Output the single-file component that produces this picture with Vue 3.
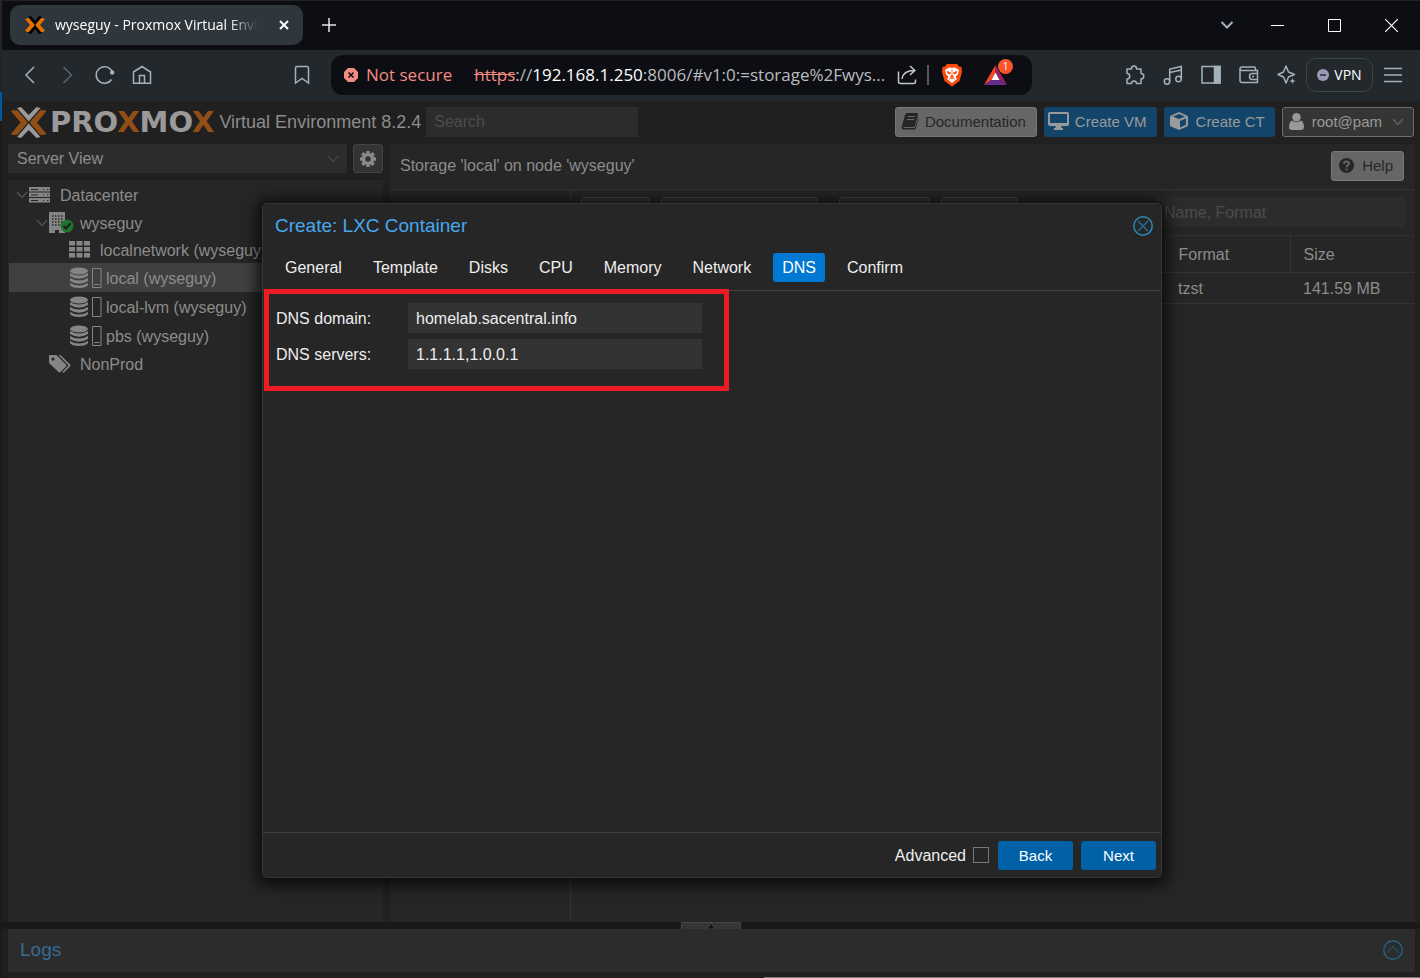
<script setup>
import { ref } from 'vue'

const search = ref('')
const filter = ref('')
const view = ref('Server View')
const domain = ref('homelab.sacentral.info')
const servers = ref('1.1.1.1,1.0.0.1')
const advanced = ref(false)
const tabs = ['General', 'Template', 'Disks', 'CPU', 'Memory', 'Network', 'DNS', 'Confirm']
const active = ref('DNS')
const nodes = [
  { label: 'Datacenter', icon: 'server', level: 0, open: true },
  { label: 'wyseguy', icon: 'node', level: 1, open: true },
  { label: 'localnetwork (wyseguy)', icon: 'grid', level: 2 },
  { label: 'local (wyseguy)', icon: 'storage', level: 2, used: true, selected: true },
  { label: 'local-lvm (wyseguy)', icon: 'storage', level: 2 },
  { label: 'pbs (wyseguy)', icon: 'storage', level: 2, used: true },
  { label: 'NonProd', icon: 'tags', level: 1 }
]
const rowsOfThree = [0, 1, 2]
</script>

<template>
  <div class="screen">
    <div class="edge" aria-hidden="true"></div>
    <div class="window">
      <header class="titlebar">
        <div class="tab">
          <svg width="20" height="18" viewBox="0 0 20 18">
            <path d="M0 3L3 2H5L11 9L5 16H2L0 14.500L5 9Z M20 3L17 2H15L9 9L15 16H18L20 14.500L15 9Z" fill="#e57000" />
            <path d="M3 1L6 0L10 5L14 0L17 1L10 9Z M3 17L6 18L10 13L14 18L17 17L10 9Z" fill="#000" />
          </svg>
          <span class="tab-title">wyseguy - Proxmox Virtual Envi</span>
          <button class="plain tab-close" aria-label="Close tab">
            <svg width="10" height="10" viewBox="0 0 10 10" stroke="#fff" stroke-width="2"><path d="M1 1L9 9M9 1L1 9" /></svg>
          </button>
        </div>
        <button class="plain newtab" aria-label="New tab">
          <svg width="14" height="14" viewBox="0 0 14 14" stroke="#e6e6e8" stroke-width="1.500"><path d="M7 0V14M0 7H14" /></svg>
        </button>
        <div class="controls">
          <button class="plain chevron" aria-label="Search tabs">
            <svg width="14" height="10" viewBox="0 0 14 10" fill="none" stroke="#a6b2b9" stroke-width="2"><path d="M1.500 2L7 7.500L12.500 2" /></svg>
          </button>
          <button class="plain" aria-label="Minimize">
            <svg width="13" height="13" viewBox="0 0 13 13" stroke="#fff"><path d="M0 6.500H13" /></svg>
          </button>
          <button class="plain" aria-label="Maximize">
            <svg width="13" height="13" viewBox="0 0 13 13" stroke="#fff" fill="none"><path d="M.5 .5H12.500V12.500H.5Z" /></svg>
          </button>
          <button class="plain" aria-label="Close">
            <svg width="13" height="13" viewBox="0 0 13 13" stroke="#fff" stroke-width="1.200"><path d="M0 0L13 13M13 0L0 13" /></svg>
          </button>
        </div>
      </header>

      <nav class="toolbar">
        <button class="plain nav" aria-label="Back">
          <svg width="20" height="20" viewBox="0 0 20 20"><path d="M13 2L5 10L13 18" /></svg>
        </button>
        <button class="plain nav off" aria-label="Forward">
          <svg width="20" height="20" viewBox="0 0 20 20"><path d="M5.500 2L13.500 10L5.500 18" /></svg>
        </button>
        <button class="plain nav" aria-label="Reload">
          <svg width="20" height="20" viewBox="0 0 20 20"><path d="M16.500 14.500A8.300 8.300 0 1 1 16.800 6" /><circle cx="17.200" cy="7.500" r="2.200" fill="#a3b2ba" stroke="none" /></svg>
        </button>
        <button class="plain nav" aria-label="Home">
          <svg width="20" height="20" viewBox="0 0 20 20"><path d="M1.500 7L10 1.500L18.500 7V18.300H1.500ZM7.500 18V10.500H12.500V18" /></svg>
        </button>
        <button class="plain nav bookmark" aria-label="Bookmark">
          <svg width="20" height="20" viewBox="0 0 20 20"><path d="M3.500 18V3Q3.500 1.500 5 1.500H15Q16.500 1.500 16.500 3V18L10 13.500Z" /></svg>
        </button>
        <div class="address">
          <svg width="14" height="14" viewBox="0 0 14 14"><path d="M4 0H10L14 4V10L10 14H4L0 10V4Z" fill="#f28b82" /><path d="M4.500 4.500L9.500 9.500M9.500 4.500L4.500 9.500" stroke="#0d0e13" stroke-width="1.500" /></svg>
          <span class="insecure">Not secure</span>
          <span class="url"><s>https</s>://<b>192.168.1.250</b>:8006/#v1:0:=storage%2Fwys...</span>
          <button class="plain share" aria-label="Share">
            <svg width="20" height="20" viewBox="0 0 20 20" fill="none" stroke="#c3c6ca" stroke-width="1.500"><path d="M1.500 6.500V16.500Q1.500 18.500 3.500 18.500H16.500Q18.500 18.500 18.500 16.500V14.500M5 14Q6 5.500 17.500 5.500M13 1L17.800 5.500L13 10" /></svg>
          </button>
          <i class="divider"></i>
          <button class="plain brave" aria-label="Shields">
            <svg width="20" height="23" viewBox="0 0 20 23">
              <path d="M5 0H15L17 2.500L19.500 3L20 8L17.500 17L10 22.500L2.500 17L0 8L.5 3L3 2.500Z" fill="#fb4b0c" />
              <path d="M7 3.500L10 4L13 3.500L17 6L16 10L13.500 13L15 15L10 19L5 15L6.500 13L4 10L3 6Z" fill="#fff" />
              <path d="M5 7.500L8.500 8.500L8 10L6 9.500ZM15 7.500L11.500 8.500L12 10L14 9.500ZM8 12.500L10 11.500L12 12.500L10 14ZM10 5V11.500M7 15L10 14.500L13 15" fill="#fb4b0c" stroke="#fb4b0c" stroke-width=".7" />
            </svg>
          </button>
          <button class="plain rewards" aria-label="Rewards">
            <svg width="23" height="20" viewBox="0 0 23 20"><path d="M11.500 0L0 20L7.500 15L11.500 7.500Z" fill="#ff4724" /><path d="M11.500 0L23 20L15.500 15L11.500 7.500Z" fill="#9e1f63" /><path d="M0 20H23L15.500 15H7.500Z" fill="#662d91" /><path d="M11.500 7.500L15.500 15H7.500Z" fill="#fff" /></svg>
            <span class="badge">1</span>
          </button>
        </div>
        <button class="plain ext" aria-label="Extensions">
          <svg width="20" height="20" viewBox="0 0 20 20"><path d="M2 4H6.500V3.500A2.500 2.500 0 0 1 11.500 3.500V4H16V8.500A2.300 2.300 0 0 1 16 14V18.500H11.500A2.500 2.500 0 0 0 6.500 18.500H2V14A2.700 2.700 0 0 0 2 8.500Z" stroke-linejoin="round" /></svg>
        </button>
        <button class="plain ext" aria-label="Media">
          <svg width="20" height="20" viewBox="0 0 20 20"><circle cx="4" cy="16.500" r="2.700" /><circle cx="15.500" cy="14" r="2.700" /><path d="M6.700 16.500V4L18.300 1.500V14M6.700 7.500L18.300 5" /></svg>
        </button>
        <button class="plain ext" aria-label="Sidebar">
          <svg width="20" height="20" viewBox="0 0 20 20"><path d="M1 1.500H19V18H1Z" /><path d="M13.500 1.500H19V18H13.500Z" fill="#a3b2ba" /></svg>
        </button>
        <button class="plain ext" aria-label="Wallet">
          <svg width="20" height="20" viewBox="0 0 20 20"><path d="M16.500 5V3.500Q16.500 2 15 2H3Q1 2 1 4Q1 5.500 3 5.500H18.500V17.500H3Q1 17.500 1 15.500V4M18.500 8.500H13Q10.500 8.500 10.500 11.500Q10.500 14.500 13 14.500H18.500M13 11.500H15" /></svg>
        </button>
        <button class="plain ext" aria-label="Assistant">
          <svg width="20" height="20" viewBox="0 0 20 20"><path d="M9 1L11.500 7L17.500 9.500L11.500 12L9 18L6.500 12L1 9.500L6.500 7Z" stroke-linejoin="round" /><path d="M15.500 12.500L16.500 15L19 16L16.500 17L15.500 19.500L14.500 17L12 16L14.500 15Z" fill="#a3b2ba" stroke="#23282d" stroke-width=".5" /></svg>
        </button>
        <button class="vpn">
          <svg width="12" height="12" viewBox="0 0 12 12"><circle cx="6" cy="6" r="6" fill="#9a98b5" /><path d="M3 6H9" stroke="#23282d" stroke-width="1.500" /></svg>
          VPN
        </button>
        <button class="plain menu" aria-label="Menu">
          <svg width="20" height="16" viewBox="0 0 20 16"><path d="M1 1.500H19M1 8H19M1 14.500H19" /></svg>
        </button>
      </nav>

      <div class="page">
        <div class="header">
          <svg class="mark" width="36" height="31" viewBox="0 0 36 31">
            <path d="M.5 4L6 3.500L16.500 15.500L6 27.500L.5 27L10 15.500ZM35 4L29.500 3.500L19 15.500L29.500 27.500L35 27L25.500 15.500Z" fill="#914f16" stroke="#914f16" stroke-width="1" />
            <path d="M6 1L10 0L17.700 8L25.500 0L29.500 1L17.700 14.500ZM6 30L10 31L17.700 23L25.500 31L29.500 30L17.700 16.500Z" fill="#9a9a9a" />
          </svg>
          <span class="wordmark">PRO<em>X</em>MO<em>X</em></span>
          <span class="version">Virtual Environment 8.2.4</span>
          <input v-model="search" class="search" placeholder="Search" aria-label="Search" />
          <div class="actions">
            <button class="btn grey">
              <svg width="18" height="18" viewBox="0 0 18 18"><path d="M6 1H16Q17.500 1.500 17 3L14 13.500Q13.500 15 12 15H3Q2 15.500 3 16H12.500Q14 16 14.500 14.500L17.500 5Q18 6 17.500 7L15 16Q14.500 17.500 13 17.500H3Q0 17 .8 14.500L4 3Q4.500 1.500 6 1Z" /><path d="M7 4.500H14M6 7.500H13" stroke="#666" stroke-width="1.200" /></svg>
              Documentation
            </button>
            <button class="btn blue">
              <svg width="22" height="18" viewBox="0 0 22 18"><path fill-rule="evenodd" d="M2 0H19Q21 0 21 2V12Q21 14 19 14H13.500V16H15V18H6V16H7.500V14H2Q0 14 0 12V2Q0 0 2 0ZM2 2V11H19V2Z" /></svg>
              Create VM
            </button>
            <button class="btn blue ct">
              <svg width="18" height="18" viewBox="0 0 18 18"><path fill-rule="evenodd" d="M9 0L17 3.500Q18 4 18 5V13Q18 14 17 14.500L9 18L1 14.500Q0 14 0 13V5Q0 4 1 3.500ZM9 2L3 4.500L9 7L15 4.500ZM10 9V15.500L16 12.800V6.300Z" /></svg>
              Create CT
            </button>
            <button class="btn user">
              <svg width="15" height="17" viewBox="0 0 15 17"><circle cx="7.500" cy="4.200" r="4.200" /><path d="M3 7.500Q7.500 11 12 7.500Q15 9 15 14Q15 17 12 17H3Q0 17 0 14Q0 9 3 7.500Z" /></svg>
              root@pam
              <svg class="caret" width="12" height="8" viewBox="0 0 12 8"><path d="M1 1L6 6.500L11 1" /></svg>
            </button>
          </div>
        </div>

        <div class="body">
          <aside class="left">
            <div class="viewrow">
              <div class="selectwrap">
                <select v-model="view" aria-label="View"><option>Server View</option></select>
                <svg width="12" height="8" viewBox="0 0 12 8"><path d="M1 1L6 6.500L11 1" /></svg>
              </div>
              <button class="gear" aria-label="Settings">
                <svg width="16" height="16" viewBox="0 0 16 16"><circle cx="8" cy="8" r="4.500" fill="none" stroke="#898989" stroke-width="3.400" /><path d="M8 0V3M8 13V16M0 8H3M13 8H16M2.300 2.300L4.500 4.500M11.500 11.500L13.700 13.700M2.300 13.700L4.500 11.500M11.500 4.500L13.700 2.300" stroke="#898989" stroke-width="3.400" /></svg>
              </button>
            </div>
            <ul class="tree">
              <li v-for="n in nodes" :key="n.label" :class="[n.icon, 'level' + n.level, { selected: n.selected }]">
                <svg v-if="n.open" class="expand" width="12" height="8" viewBox="0 0 12 8"><path d="M1 1L6 6.500L11 1" /></svg>
                <svg v-if="n.icon === 'server'" width="21" height="16" viewBox="0 0 21 16">
                  <g v-for="r in rowsOfThree" :key="r" :transform="`translate(0 ${r * 5.5})`"><path d="M0 0H21V4.500H0Z" /><path d="M2 2.500H9M14 2.500H15M18 2.500H19.500" stroke="#262626" /></g>
                </svg>
                <svg v-else-if="n.icon === 'node'" class="building" width="25" height="22" viewBox="0 0 25 22">
                  <path d="M0 0H16V21H10V18H6V21H0Z" />
                  <path d="M3 4H14M3 7H14M3 10H14M3 13H14" stroke="#262626" stroke-width="1.500" stroke-dasharray="1.500 1.500" />
                  <circle cx="18" cy="14" r="6.500" fill="#20742f" /><path d="M14.500 14L17 16.500L21.500 11.500" fill="none" stroke="#1d1d1d" stroke-width="2" />
                </svg>
                <svg v-else-if="n.icon === 'grid'" width="21" height="17" viewBox="0 0 21 17">
                  <g v-for="r in rowsOfThree" :key="r" :transform="`translate(0 ${r * 6})`"><path d="M0 0H6V4.500H0ZM7.500 0H13.500V4.500H7.500ZM15 0H21V4.500H15Z" /></g>
                </svg>
                <svg v-else-if="n.icon === 'storage'" width="33" height="22" viewBox="0 0 33 22">
                  <ellipse cx="10" cy="4" rx="9" ry="3.500" />
                  <path d="M1 6Q10 11 19 6V9Q10 14.500 1 9ZM1 11Q10 16 19 11V14Q10 19.500 1 14ZM1 16Q10 21 19 16V18Q17 21 10 21Q3 21 1 18Z" />
                  <path d="M23.500 1.500H32V20.500H23.500Z" fill="none" stroke="#858585" /><path v-if="n.used" d="M25 17.500H30.500" stroke="#858585" />
                </svg>
                <svg v-else width="22" height="18" viewBox="0 0 22 18">
                  <path fill-rule="evenodd" d="M0 1Q0 0 1 0H7.500L17 9.500Q18 10.500 17 11.500L11.500 17Q10.500 18 9.500 17L0 8ZM4 2.500A1.600 1.600 0 1 0 4 5.700A1.600 1.600 0 1 0 4 2.500Z" /><path d="M9.500 0H11.500L21 9.500Q22 10.500 21 11.500L15 17.500Q14 18 13.300 17L19 11Q19.500 10.500 19 10Z" />
                </svg>
                <span>{{ n.label }}</span>
              </li>
            </ul>
          </aside>

          <section class="content">
            <div class="contenthead">
              <span>Storage 'local' on node 'wyseguy'</span>
              <button class="btn grey help">
                <svg width="15" height="15" viewBox="0 0 15 15"><circle cx="7.500" cy="7.500" r="7.500" /><path d="M5 5.800Q5 3.500 7.500 3.500Q10 3.500 10 5.500Q10 6.600 8.700 7.300Q7.600 8 7.600 9.200M7.600 10.500V12.500" fill="none" stroke="#666" stroke-width="2" /></svg>
                Help
              </button>
            </div>
            <div class="split">
              <div class="subnav"></div>
              <div class="storage">
                <div class="storagebar">
                  <button class="ghost upload" aria-label="Upload"></button>
                  <button class="ghost download" aria-label="Download from URL"></button>
                  <button class="ghost templates" aria-label="Templates"></button>
                  <button class="ghost remove" aria-label="Remove"></button>
                  <input v-model="filter" placeholder="Name, Format" aria-label="Name, Format" />
                </div>
                <table>
                  <thead><tr><th></th><th class="fmt">Format</th><th class="size">Size</th></tr></thead>
                  <tbody><tr><td></td><td>tzst</td><td>141.59 MB</td></tr></tbody>
                </table>
              </div>
            </div>
          </section>
        </div>

        <div class="splitter">
          <button aria-label="Expand logs"><svg width="10" height="6" viewBox="0 0 10 6"><path d="M5 0L9 6H1Z" fill="#151515" stroke="#555" stroke-width=".7" /></svg></button>
        </div>
        <footer class="logs">
          <span>Logs</span>
          <button class="plain" aria-label="Show logs">
            <svg width="20" height="20" viewBox="0 0 20 20" fill="none"><circle cx="10" cy="10" r="9.300" stroke="#23657f" stroke-width="1.400" /><path d="M4.500 12.500L10 6.500L15.500 12.500" stroke="#204c63" stroke-width="1.500" /></svg>
          </button>
        </footer>
        <div class="bottomline"></div>

        <div class="overlay">
          <form class="dialog" role="dialog" aria-labelledby="dialog-title" @submit.prevent>
            <div class="dialoghead">
              <h1 id="dialog-title">Create: LXC Container</h1>
              <button type="button" class="plain" aria-label="Close dialog">
                <svg width="20" height="20" viewBox="0 0 20 20" fill="none"><circle cx="10" cy="10" r="9.200" stroke="#2a8db5" stroke-width="1.500" /><path d="M5 5L15 15M15 5L5 15" stroke="#1d6d96" stroke-width="1.500" /></svg>
              </button>
            </div>
            <div class="tabs" role="tablist">
              <button v-for="t in tabs" :key="t" type="button" role="tab" :aria-selected="active === t" :class="{ active: active === t }" @click="active = t">{{ t }}</button>
            </div>
            <div class="fields">
              <label for="dns-domain">DNS domain:</label><input id="dns-domain" v-model="domain" />
              <label for="dns-servers">DNS servers:</label><input id="dns-servers" v-model="servers" />
              <div class="highlight"></div>
            </div>
            <div class="dialogfoot">
              <label for="advanced">Advanced</label>
              <input id="advanced" v-model="advanced" type="checkbox" />
              <button type="button">Back</button>
              <button type="submit">Next</button>
            </div>
          </form>
        </div>
      </div>
    </div>
  </div>
</template>

<style>
body {
  background: #212121;
}
</style>

<style scoped>
* {
  box-sizing: border-box;
}
.screen {
  display: flex;
  min-height: 100vh;
  font: 16px/20px "Liberation Sans", Arial, sans-serif;
  color: #8c8c8c;
  background: #202020;
}
.edge {
  width: 2px;
  background: linear-gradient(#242424 92px, #00589f 92px, #00589f 121px, #1b1b1b 121px);
}
.window {
  flex: 1;
  min-width: 0;
  display: flex;
  flex-direction: column;
}
button, input, select {
  font: inherit;
  color: inherit;
  margin: 0;
}
svg {
  display: block;
  flex: none;
}
.plain {
  display: flex;
  align-items: center;
  justify-content: center;
  padding: 0;
  border: 0;
  background: none;
}

/* browser frame */
.titlebar {
  display: flex;
  align-items: center;
  height: 50px;
  padding: 0 0 1px 8px;
  border-top: 1px solid #222;
  background: #0d0e13;
}
.tab {
  display: flex;
  align-items: center;
  width: 293px;
  height: 40px;
  padding: 0 14px 0 15px;
  border-radius: 10px;
  background: #30373c;
  color: #fff;
  font: 14px/20px "Open Sans", "Noto Sans", sans-serif;
}
.tab-title {
  margin-left: 10px;
  white-space: nowrap;
  mask-image: linear-gradient(90deg, #000 85%, transparent);
}
.tab-close {
  margin-left: auto;
}
.newtab {
  width: 52px;
  height: 40px;
}
.controls {
  display: flex;
  margin-left: auto;
}
.controls button {
  width: 57px;
  height: 48px;
}
.controls .chevron {
  width: 44px;
}
.toolbar {
  display: flex;
  align-items: center;
  height: 51px;
  padding: 0 7px 1px 10px;
  background: #23282d;
}
.toolbar svg {
  fill: none;
}
.nav, .ext, .menu {
  height: 36px;
  stroke: #a3b2ba;
  stroke-width: 1.5;
}
.nav {
  width: 37px;
}
.off {
  stroke: #59636a;
}
.bookmark {
  margin-left: 123px;
}
.ext {
  width: 38px;
}
.menu {
  width: 40px;
}
.address {
  display: flex;
  flex: 1;
  align-items: center;
  min-width: 0;
  height: 40px;
  margin: 0 84px 0 11px;
  padding: 0 25px 0 13px;
  border-radius: 12px;
  background: #0d0e13;
  font: 17px/24px "Open Sans", "Noto Sans", sans-serif;
  color: #b9bcbf;
}
.insecure {
  margin: 0 22px 0 8px;
  white-space: nowrap;
  color: #f28b82;
}
.url {
  flex: 1;
  white-space: nowrap;
}
.url s {
  color: #f28b82;
}
.url b {
  font-weight: 400;
  color: #fff;
}
.share {
  margin-left: 4px;
}
.divider {
  width: 2px;
  height: 20px;
  margin: 0 13px 0 10px;
  background: #55585d;
}
.rewards {
  position: relative;
  margin-left: 22px;
}
.badge {
  position: absolute;
  top: -6px;
  right: -6px;
  width: 15px;
  height: 15px;
  border-radius: 8px;
  background: #fb542b;
  color: #fff;
  font: 10px/15px "Open Sans", sans-serif;
}
.vpn {
  display: flex;
  align-items: center;
  justify-content: center;
  gap: 5px;
  width: 67px;
  height: 34px;
  padding: 0;
  border: 1px solid #3b454a;
  border-radius: 10px;
  background: none;
  color: #fff;
  font: 14px/20px "Open Sans", "Noto Sans", sans-serif;
}

/* page */
.page {
  position: relative;
  display: flex;
  flex: 1;
  flex-direction: column;
  padding: 0 5px 0 6px;
  background: #202020;
}
.header {
  display: flex;
  align-items: center;
  height: 43px;
  padding: 0 1px 1px 3px;
}
.wordmark {
  margin-left: 3px;
  color: #9a9a9a;
  font: bold 29px/30px "DejaVu Sans", sans-serif;
}
.wordmark em {
  color: #914f16;
  font-style: normal;
}
.version {
  margin-left: 5px;
  font-size: 18px;
  white-space: nowrap;
}
.search {
  width: 212px;
  height: 30px;
  margin-left: 5px;
  padding: 0 8px;
  border: 0;
  background: #2c2c2c;
}
::placeholder {
  color: #4c4c4c;
  opacity: 1;
}
.actions {
  display: flex;
  gap: 7px;
  margin-left: auto;
}
.btn {
  display: flex;
  align-items: center;
  gap: 6px;
  height: 30px;
  padding: 0 10px 0 5px;
  border: 1px solid transparent;
  border-radius: 3px;
  font-size: 15px;
  white-space: nowrap;
  fill: currentColor;
}
.btn svg:first-child {
  margin-bottom: 2px;
}
.grey {
  border-color: #777;
  background: #666;
  color: #262626;
}
.blue {
  gap: 5px;
  padding: 0 9px 0 3px;
  background: #13456b;
  color: #9a9a9a;
}
.ct {
  gap: 8px;
  padding-left: 5px;
}
.user {
  gap: 8px;
  padding: 0 9px 0 6px;
  border-color: #6b7070;
  background: #353535;
  color: #999;
}
.caret {
  margin-left: 2px;
}
.caret, .expand, .selectwrap svg {
  fill: none;
  stroke: #626262;
  stroke-width: 1.5;
}
.body {
  display: flex;
  flex: 1;
  gap: 7px;
}
.left {
  display: flex;
  flex-direction: column;
  width: 375px;
}
.viewrow {
  display: flex;
  gap: 6px;
  margin-bottom: 7px;
}
.selectwrap {
  display: flex;
  flex: 1;
  align-items: center;
  height: 29px;
  padding-right: 8px;
  background: #2c2c2c;
}
.selectwrap svg {
  stroke: #424242;
}
.selectwrap select {
  flex: 1;
  height: 29px;
  padding: 0 9px;
  border: 0;
  background: none;
  appearance: none;
}
.gear {
  display: grid;
  place-items: center;
  width: 30px;
  height: 29px;
  padding: 0;
  border: 1px solid #444;
  border-radius: 3px;
  background: #333;
}
.tree {
  flex: 1;
  margin: 0;
  padding: 1px 0 0;
  overflow: hidden;
  list-style: none;
  background: #262626;
}
.tree li {
  display: flex;
  align-items: center;
  height: 27px;
  margin: 0 1px;
  padding-left: 60px;
  gap: 10px;
  white-space: nowrap;
  fill: #858585;
}
.tree span {
  padding-top: 2px;
}
.tree .level0 {
  height: 28px;
  gap: 1px;
  padding-left: 7px;
}
.tree .level0 span {
  margin-left: 9px;
}
.tree .node {
  gap: 1px;
  padding-left: 27px;
}
.tree .node span {
  margin-left: 5px;
}
.tree .storage {
  height: 29px;
  gap: 4px;
}
.tree .tags {
  gap: 9px;
  padding-left: 40px;
}
.tree .selected {
  background: #404040;
}
.expand {
  stroke: #505050;
}
.content {
  display: flex;
  flex: 1;
  flex-direction: column;
  min-width: 0;
  background: #262626;
}
.contenthead {
  display: flex;
  align-items: center;
  justify-content: space-between;
  height: 46px;
  padding: 0 11px 1px 10px;
  border-bottom: 1px solid #333;
}
.help {
  gap: 8px;
  padding-left: 7px;
}
.split {
  display: flex;
  flex: 1;
}
.subnav {
  width: 181px;
  border-right: 1px solid #333;
}
.content .storage {
  flex: 1;
}
.storagebar {
  display: flex;
  height: 45px;
  padding: 7px 9px 0 10px;
}
.ghost {
  height: 30px;
  padding: 0;
  border: 1px solid #484848;
  border-radius: 3px;
  background: #303030;
}
.upload {
  width: 69px;
}
.download {
  width: 157px;
  margin-left: 11px;
}
.templates {
  width: 91px;
  margin-left: 21px;
}
.remove {
  width: 77px;
  margin-left: 11px;
}
.storagebar input {
  width: 250px;
  height: 30px;
  margin-left: auto;
  padding: 1px 8px 0;
  border: 0;
  background: #2c2c2c;
}
table {
  width: 100%;
  table-layout: fixed;
  border-collapse: collapse;
}
th, td {
  height: 31px;
  padding: 1px 12px 0 13px;
  border-bottom: 1px solid #343434;
  text-align: left;
  font-weight: 400;
}
th {
  height: 37px;
  border-top: 1px solid #303030;
}
.fmt, .size {
  width: 125px;
  border-left: 1px solid #343434;
}
.splitter {
  display: flex;
  justify-content: center;
  height: 7px;
  margin: 0 -5px 0 -6px;
  background: #191919;
}
.splitter button {
  display: flex;
  justify-content: center;
  width: 60px;
  height: 7px;
  padding: 0;
  border: 1px solid #444;
  border-bottom: 0;
  background: #353535;
}
.logs {
  display: flex;
  align-items: center;
  justify-content: space-between;
  height: 43px;
  padding: 0 12px 2px;
  background: #2c2c2c;
  color: #386b91;
  font-size: 19px;
}
.bottomline {
  width: 656px;
  height: 6px;
  margin: 0 -5px 0 auto;
  border-bottom: 1px solid #777;
}

/* wizard */
.overlay {
  position: absolute;
  inset: 0;
  display: grid;
  place-items: center;
  padding: 1px 0 0 2px;
}
.dialog {
  display: flex;
  flex-direction: column;
  width: min(900px, 94%);
  height: min(675px, 94%);
  border: 1px solid #353535;
  border-radius: 5px;
  background: #262626;
  box-shadow: 0 2px 14px 6px rgba(0, 0, 0, .65);
  color: #eee;
}
.dialoghead {
  display: flex;
  align-items: center;
  justify-content: space-between;
  height: 45px;
  padding: 0 8px 0 12px;
}
h1 {
  margin: 0;
  color: #47a8ef;
  font-size: 19px;
  font-weight: 400;
}
.tabs {
  display: flex;
  align-items: flex-start;
  gap: 13px;
  height: 42px;
  padding: 4px 13px;
  border-bottom: 1px solid #404040;
}
.tabs button {
  height: 29px;
  padding: 2px 9px 0;
  border: 0;
  border-radius: 3px;
  background: none;
}
.tabs .active {
  background: #0078d4;
  color: #fff;
}
.fields {
  position: relative;
  display: grid;
  flex: 1;
  grid-template-columns: 132px 294px;
  grid-auto-rows: 30px;
  gap: 6px 0;
  align-content: start;
  align-items: center;
  padding: 12px 13px;
}
.fields label {
  padding-top: 2px;
}
.fields input {
  height: 30px;
  padding: 2px 8px 0;
  border: 0;
  background: #333;
}
.highlight {
  position: absolute;
  top: -2px;
  left: 1px;
  width: 465px;
  height: 102px;
  border: 5px solid #ed1c24;
  pointer-events: none;
}
.dialogfoot {
  display: flex;
  align-items: center;
  height: 45px;
  padding: 1px 5px 0 8px;
  border-top: 1px solid #404040;
}
.dialogfoot label {
  margin-left: auto;
  padding-top: 2px;
}
.dialogfoot input {
  width: 16px;
  height: 16px;
  margin: 0 1px 0 7px;
  border: 1px solid #777;
  background: transparent;
  appearance: none;
}
.dialogfoot button {
  width: 75px;
  height: 29px;
  margin-left: 8px;
  padding: 1px 0 0;
  border: 0;
  border-radius: 3px;
  background: #0061a7;
  color: #fff;
  font-size: 15px;
}
</style>
